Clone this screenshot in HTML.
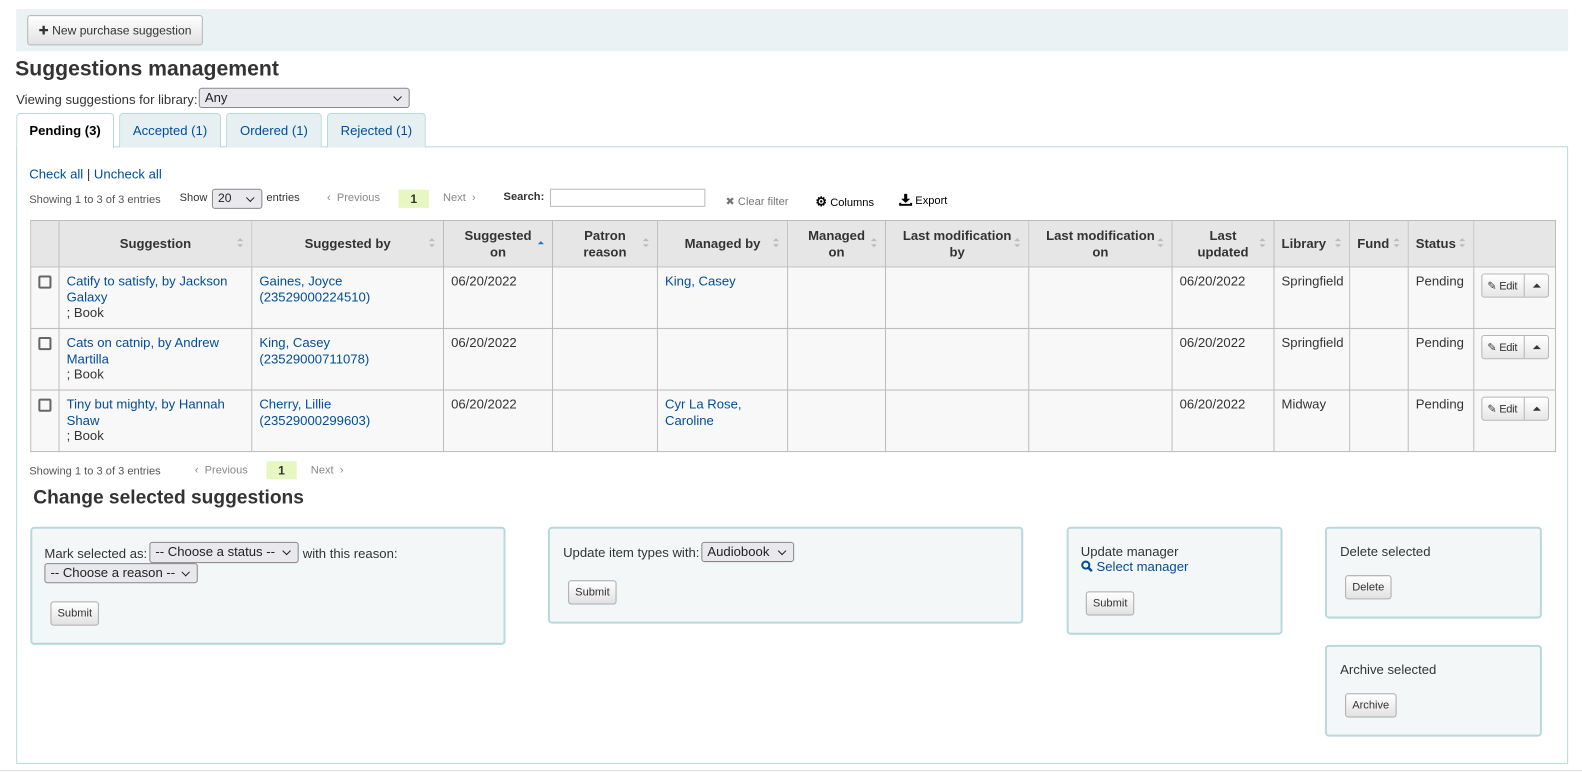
<!DOCTYPE html>
<html><head><meta charset="utf-8"><style>
*{box-sizing:border-box}
html,body{margin:0;padding:0;overflow:hidden}
body{height:770px;background:#fff;font-family:"Liberation Sans",sans-serif;font-size:13px;color:#333;position:relative}
#w{position:absolute;left:0;top:0;width:1560px;height:760px;transform:scale(1.0091);transform-origin:0 0}
a{color:#004d99;text-decoration:none}
.abs{position:absolute}
.btn{position:absolute;border:1px solid #b5b5b5;border-radius:3px;background:linear-gradient(#fff,#e2e2e2);font-size:12px;color:#333;text-align:center}
.sel{position:absolute;border:1px solid #888;border-radius:3px;background:#e9e9ed;font-size:13px;padding:1px 5px;color:#222}
.sel:after{content:"";position:absolute;right:8px;top:5px;width:5px;height:5px;border-right:1.5px solid #222;border-bottom:1.5px solid #222;transform:rotate(45deg)}
.tab{position:absolute;top:112px;height:34px;border:1px solid #b9d8d9;border-bottom:none;border-radius:4px 4px 0 0;background:#e6f0f2;color:#004d99;font-size:13px;text-align:center;line-height:33px}
table{position:absolute;left:30px;top:218px;border-collapse:collapse;table-layout:fixed;width:1511px}
td,th{border:1px solid #bcbcbc;vertical-align:top;padding:6px 7px;font-size:13px;line-height:15.5px}
th{background:#e6e6e6;vertical-align:middle;text-align:center;font-weight:bold;height:46px;position:relative}
th.s:after{content:"";position:absolute;right:8px;top:17px;border:3.5px solid transparent;border-bottom-color:#bbb;border-top:0;}
th.s:before{content:"";position:absolute;right:8px;top:23px;border:3.5px solid transparent;border-top-color:#bbb;border-bottom:0}
tr.r td{height:61px;background:#f8f8f8}
.cb{width:13px;height:13px;border:2px solid #666;border-radius:2px;margin-top:2px}
.edit{position:relative;display:inline-block;width:67px;height:24px;border:1px solid #b5b5b5;border-radius:3px;background:linear-gradient(#fff,#e6e6e6);font-size:11px;margin-top:0}
.edit span{position:absolute;left:5px;top:5px;letter-spacing:-0.3px}
.edit i{position:absolute;left:41px;top:0;bottom:0;border-left:1px solid #b5b5b5}
.edit b{position:absolute;left:50px;top:9px;border:4px solid transparent;border-bottom:4px solid #333;border-top:0}
.box{position:absolute;border:2px solid #b9d8d9;border-radius:4px;background:#f4f7f8}
.sm{position:absolute;border:1px solid #aaa;border-radius:3px;background:linear-gradient(#fff,#e2e2e2);font-size:11px;padding:5px 6px;color:#333}
.page{position:absolute;font-size:11px;color:#555}
</style></head><body><div id="w">
<div class="abs" style="left:16px;top:9px;width:1538px;height:42px;background:#eaf2f3"></div>
<div class="btn" style="left:27px;top:15px;width:174px;height:30px;line-height:28px">✚ New purchase suggestion</div>
<div class="abs" style="left:15px;top:57px;font-size:21px;font-weight:bold;color:#333">Suggestions management</div>
<div class="abs" style="left:16px;top:91px">Viewing suggestions for library:</div>
<div class="sel" style="left:197px;top:87px;width:209px;height:20px">Any</div>
<div class="abs" style="left:16px;top:145px;width:1538px;height:612px;border:1px solid #b9d8d9"></div>
<div class="tab" style="left:16px;width:97px;background:#fff;color:#000;font-weight:bold;height:35px">Pending (3)</div>
<div class="tab" style="left:118px;width:101px">Accepted (1)</div>
<div class="tab" style="left:224px;width:95px">Ordered (1)</div>
<div class="tab" style="left:324px;width:98px">Rejected (1)</div>
<div class="abs" style="left:29px;top:165px"><a>Check all</a> | <a>Uncheck all</a></div>
<div class="page" style="left:29px;top:192px">Showing 1 to 3 of 3 entries</div>
<div class="abs" style="left:178px;top:190px;font-size:11px">Show</div>
<div class="sel" style="left:210px;top:187px;width:50px;height:20px;font-size:12px">20</div>
<div class="abs" style="left:264px;top:190px;font-size:11px">entries</div>
<div class="page" style="left:324px;top:190px;color:#888">‹ &nbsp;Previous</div>
<div class="abs" style="left:395px;top:188px;width:30px;height:18px;background:#e6f7c2;text-align:center;font-size:12px;font-weight:bold;line-height:18px">1</div>
<div class="page" style="left:439px;top:190px;color:#888">Next &nbsp;›</div>
<div class="abs" style="left:499px;top:189px;font-size:11px;font-weight:bold">Search:</div>
<div class="abs" style="left:545px;top:187px;width:154px;height:18px;border:1px solid #bbb"></div>
<div class="abs" style="left:719px;top:193px;font-size:11px;color:#777">✖ Clear filter</div>
<div class="abs" style="left:808px;top:192px;font-size:11px;color:#000"><b style="font-size:13px">⚙</b> Columns</div>
<div class="abs" style="left:891px;top:192px;font-size:11px;color:#000"><svg width="13" height="12" viewBox="0 0 13 12" style="vertical-align:-2px"><path d="M5 0h3v5h3l-4.5 4L2 5h3z M0 9h2v1h9V9h2v3H0z" fill="#000"/></svg> Export</div>
<table>
<colgroup><col style="width:28px"><col style="width:191px"><col style="width:190px"><col style="width:108px"><col style="width:104px"><col style="width:129px"><col style="width:97px"><col style="width:142px"><col style="width:142px"><col style="width:101px"><col style="width:75px"><col style="width:58px"><col style="width:65px"><col style="width:81px"></colgroup>
<tr><th></th><th class="s">Suggestion</th><th class="s">Suggested by</th><th style="position:relative">Suggested<br>on<span style="position:absolute;right:8px;top:20px;border:3.5px solid transparent;border-bottom-color:#1b74cc;border-top:0"></span></th><th class="s">Patron<br>reason</th><th class="s">Managed by</th><th class="s">Managed<br>on</th><th class="s">Last modification<br>by</th><th class="s">Last modification<br>on</th><th class="s">Last<br>updated</th><th class="s" style="text-align:left">Library</th><th class="s" style="text-align:left">Fund</th><th class="s" style="text-align:left">Status</th><th></th></tr>
<tr class="r"><td><div class="cb"></div></td><td><a>Catify to satisfy, by Jackson Galaxy</a><br>; Book</td><td><a>Gaines, Joyce<br>(23529000224510)</a></td><td>06/20/2022</td><td></td><td><a>King, Casey</a></td><td></td><td></td><td></td><td>06/20/2022</td><td>Springfield</td><td></td><td>Pending</td><td><div class="edit"><span>✎ Edit</span><i></i><b></b></div></td></tr>
<tr class="r"><td><div class="cb"></div></td><td><a>Cats on catnip, by Andrew Martilla</a><br>; Book</td><td><a>King, Casey<br>(23529000711078)</a></td><td>06/20/2022</td><td></td><td></td><td></td><td></td><td></td><td>06/20/2022</td><td>Springfield</td><td></td><td>Pending</td><td><div class="edit"><span>✎ Edit</span><i></i><b></b></div></td></tr>
<tr class="r"><td><div class="cb"></div></td><td><a>Tiny but mighty, by Hannah Shaw</a><br>; Book</td><td><a>Cherry, Lillie<br>(23529000299603)</a></td><td>06/20/2022</td><td></td><td><a>Cyr La Rose, Caroline</a></td><td></td><td></td><td></td><td>06/20/2022</td><td>Midway</td><td></td><td>Pending</td><td><div class="edit"><span>✎ Edit</span><i></i><b></b></div></td></tr>
</table>
<div class="page" style="left:29px;top:461px">Showing 1 to 3 of 3 entries</div>
<div class="page" style="left:193px;top:460px;color:#888">‹ &nbsp;Previous</div>
<div class="abs" style="left:264px;top:457px;width:30px;height:18px;background:#e6f7c2;text-align:center;font-size:12px;font-weight:bold;line-height:18px">1</div>
<div class="page" style="left:308px;top:460px;color:#888">Next &nbsp;›</div>
<div class="abs" style="left:33px;top:483px;font-size:19px;font-weight:bold">Change selected suggestions</div>
<div class="box" style="left:30px;top:522px;width:471px;height:117px"></div>
<div class="abs" style="left:44px;top:541px">Mark selected as:</div>
<div class="sel" style="left:148px;top:537px;width:148px;height:21px">-- Choose a status --</div>
<div class="abs" style="left:300px;top:541px">with this reason:</div>
<div class="sel" style="left:44px;top:558px;width:152px;height:20px">-- Choose a reason --</div>
<div class="sm" style="left:50px;top:596px">Submit</div>
<div class="box" style="left:543px;top:522px;width:471px;height:96px"></div>
<div class="abs" style="left:558px;top:540px">Update item types with:</div>
<div class="sel" style="left:695px;top:537px;width:92px;height:20px">Audiobook</div>
<div class="sm" style="left:563px;top:575px">Submit</div>
<div class="box" style="left:1057px;top:522px;width:214px;height:107px"></div>
<div class="abs" style="left:1071px;top:539px">Update manager</div>
<div class="abs" style="left:1071px;top:554px"><a><svg width="12" height="12" viewBox="0 0 12 12" style="vertical-align:-1px"><circle cx="5" cy="5" r="3.5" fill="none" stroke="#004d99" stroke-width="2"/><path d="M7.5 7.5L11 11" stroke="#004d99" stroke-width="2.4"/></svg> Select manager</a></div>
<div class="sm" style="left:1076px;top:586px">Submit</div>
<div class="box" style="left:1313px;top:522px;width:215px;height:91px"></div>
<div class="abs" style="left:1328px;top:539px">Delete selected</div>
<div class="sm" style="left:1333px;top:570px">Delete</div>
<div class="box" style="left:1313px;top:639px;width:215px;height:91px"></div>
<div class="abs" style="left:1328px;top:656px">Archive selected</div>
<div class="sm" style="left:1333px;top:687px">Archive</div>
<div class="abs" style="left:0;width:1568px;top:763px;border-top:1px solid #ddd"></div>
</div>
</body></html>
